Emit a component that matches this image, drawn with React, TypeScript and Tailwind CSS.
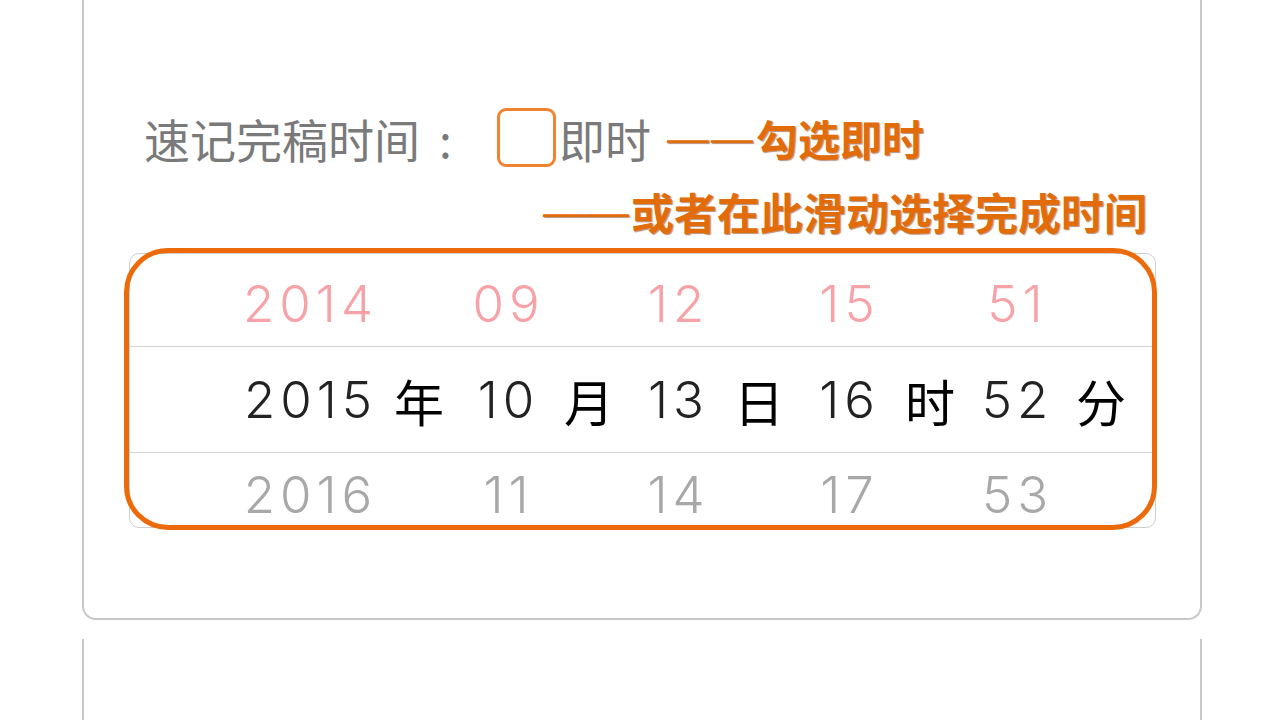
import React from "react";

const cjk = "font-['Noto_Sans_CJK_SC',sans-serif]";
const num = "font-['Inter','Liberation_Sans',sans-serif]";
const dash = "font-['Liberation_Sans',sans-serif] font-normal leading-none";

function Cell({ ml, children, cls }: { ml: string; children?: React.ReactNode; cls?: string }) {
  return (
    <div className={`w-0 shrink-0 flex justify-center whitespace-nowrap ${ml} ${cls ?? ""}`}>
      {children}
    </div>
  );
}

function Row({
  vals,
  units,
  color,
  unitColor,
  rowCls,
}: {
  vals: string[];
  units?: string[];
  color: string;
  unitColor?: string;
  rowCls: string;
}) {
  const mls = ["ml-[178px]", "ml-[111px]", "ml-[87px]", "ml-[83px]", "ml-[87px]", "ml-[83px]", "ml-[88px]", "ml-[83px]", "ml-[85px]", "ml-[86px]"];
  const items: React.ReactNode[] = [];
  vals.forEach((v, i) => {
    items.push(
      <Cell key={"n" + i} ml={mls[i * 2]}>
        <span className={`${num} text-[51px] leading-none font-light tracking-[5px] pl-[5px] ${color}`}>{v}</span>
      </Cell>
    );
    items.push(
      <Cell key={"u" + i} ml={mls[i * 2 + 1]}>
        {units ? (
          <span className={`${cjk} text-[50px] leading-none ${unitColor}`}>{units[i]}</span>
        ) : null}
      </Cell>
    );
  });
  return <div className={`flex items-center ${rowCls}`}>{items}</div>;
}

const note = `${cjk} leading-none font-bold text-[#e36c0a] [text-shadow:1px_1px_1px_rgba(110,40,0,0.5)] whitespace-nowrap`;

export default function App() {
  return (
    <div className="w-[1280px] h-[720px] bg-white overflow-hidden">
      <div className="ml-[82px] w-[1120px] h-[620px] border-x-2 border-b-2 border-[#c8c8c8] rounded-b-[14px] pt-[108px]">
        <div className="flex items-center h-[59px] ml-[60px]">
          <div className={`w-[353px] flex items-center ${cjk} text-[46px] leading-none text-[#7a7a7a]`}>
            <span>速记完稿时间</span>
            <span className="ml-[19px]">:</span>
          </div>
          <div className="w-[59px] h-[59px] border-[3px] border-[#f08232] rounded-[9px]" />
          <span className={`ml-[3px] ${cjk} text-[46px] leading-none text-[#7a7a7a]`}>即时</span>
          <div className={`ml-[16px] h-[42px] flex items-center text-[42px] ${note}`}>
            <span className={`${dash} tracking-[2px]`}>——</span>
            <span className="ml-[1px]">勾选即时</span>
          </div>
        </div>
        <div className={`ml-[459px] mt-[23px] h-[43px] flex items-center text-[43px] ${note}`}>
          <span className={dash}>——</span>
          <span className="ml-[2px]">或者在此滑动选择完成时间</span>
        </div>
        <div className="relative ml-[45px] mt-[20px] w-[1027px] h-[275px]">
          <div className="w-full h-full border border-[#cfcfcf] rounded-[10px] overflow-hidden bg-white">
            <Row
              vals={["2014", "09", "12", "15", "51"]}
              color="text-[#f6a2a6]"
              rowCls="h-[93px] border-b-[1.5px] border-[#d4d4d4] pt-[6px]"
            />
            <Row
              vals={["2015", "10", "13", "16", "52"]}
              units={["年", "月", "日", "时", "分"]}
              color="text-[#222222]"
              unitColor="text-black"
              rowCls="h-[106px] border-b-[1.5px] border-[#d4d4d4]"
            />
            <Row
              vals={["2016", "11", "14", "17", "53"]}
              color="text-[#a8a8a8]"
              rowCls="h-[94px] pb-[11px]"
            />
          </div>
          <div className="absolute -left-[5px] -top-[5px] w-[1033px] h-[282px] border-[5px] border-[#ed6a0a] rounded-[44px] pointer-events-none" />
        </div>
      </div>
      <div className="ml-[82px] mt-[19px] w-[1120px] h-[100px] border-x-2 border-[#c8c8c8]" />
    </div>
  );
}
